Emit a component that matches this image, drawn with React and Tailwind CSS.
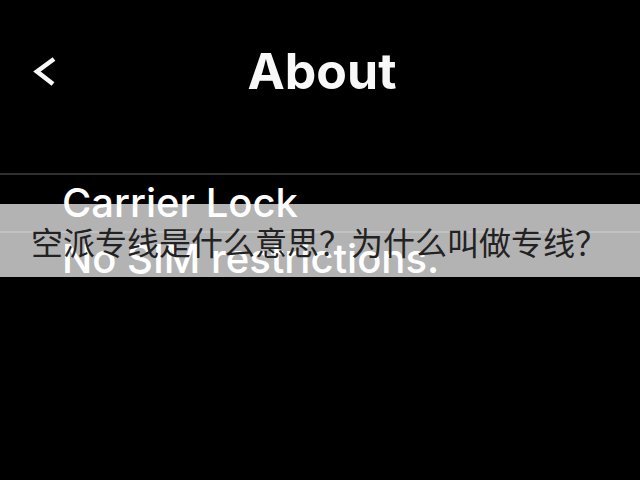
import { useId } from 'react'

function Header() {
  return (
    <header className="grid grid-cols-[1fr_auto_1fr] items-center px-8 pt-[39px]">
      <button type="button" aria-label="Back" className="justify-self-start text-[#f8f8f8]">
        <svg width="26" height="32" viewBox="0 0 26 32" fill="none" stroke="currentColor" strokeWidth="4.6">
          <path d="M22 4 L5 16.5 L21 29" />
        </svg>
      </button>
      <h1 className="pl-1 text-[50px] leading-16 font-bold text-[#f8f8f8]">About</h1>
    </header>
  )
}

function InfoRow({ label, value }) {
  const id = useId()
  return (
    <div className="text-[40px] font-medium text-white">
      <h2 id={id} className="ml-[62px] leading-[56px] font-medium">{label}</h2>
      <p aria-labelledby={id} className="border-t-2 border-[#303030] pl-[62px] leading-[52px]">{value}</p>
    </div>
  )
}

export default function App() {
  return (
    <main className="relative min-h-screen overflow-hidden bg-black font-['Inter','Liberation_Sans',sans-serif]">
      <Header />
      <section className="mt-[70px] border-t-2 border-[#303030]">
        <InfoRow label="Carrier Lock" value="No SIM restrictions." />
      </section>

      {/* Caption band laid over the settings page */}
      <div className="absolute inset-x-0 top-[204px] bg-white/70 px-[31px] pt-[17px] pb-[15px]">
        <p className="font-['Noto_Sans_CJK_SC',sans-serif] text-[32px] leading-[41px] whitespace-nowrap text-[#222222]" lang="zh-CN">
          空派专线是什么意思？为什么叫做专线？
        </p>
      </div>
    </main>
  )
}
